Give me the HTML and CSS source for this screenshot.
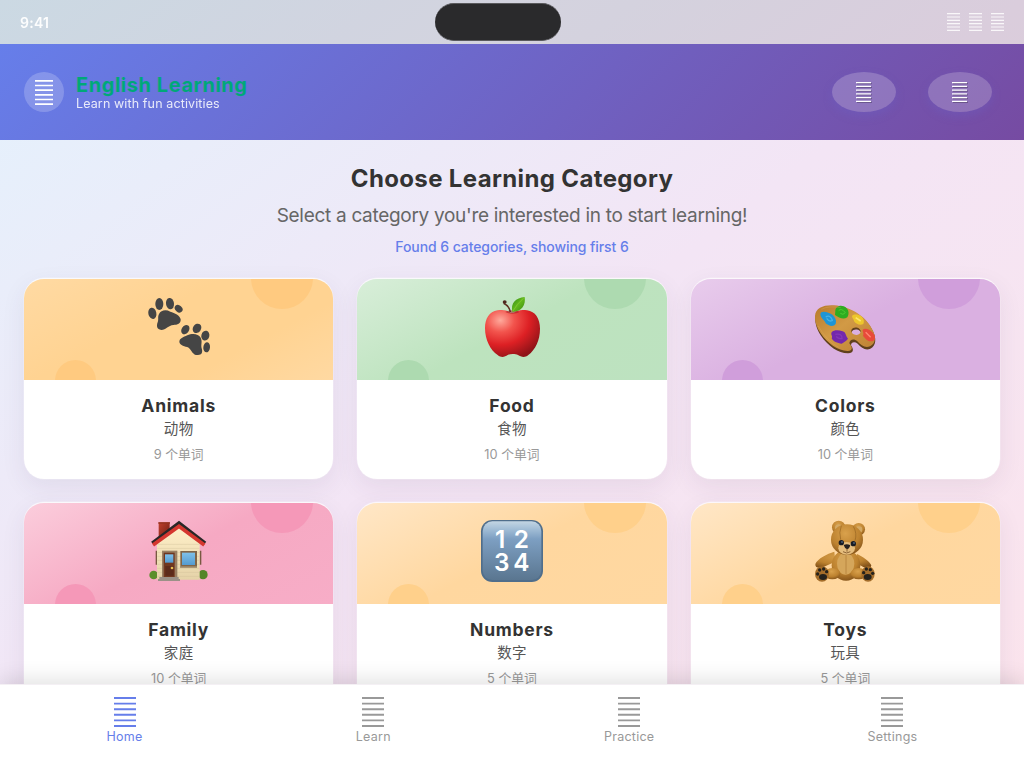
FILE: index.html
```html
<!DOCTYPE html>
<html lang="en">
<head>
<meta charset="utf-8">
<title>English Learning</title>
<link rel="stylesheet" href="styles.css">
</head>
<body>
<svg width="0" height="0" class="defs">
  <defs>
    <symbol id="bars" viewBox="0 0 22 29" preserveAspectRatio="none">
      <path d="M0 1H22M0 6.4H22M0 11.8H22M0 17.2H22M0 22.6H22M0 28H22" fill="none" stroke="currentColor" stroke-width="1.9"/>
    </symbol>
    <radialGradient id="apple" cx=".28" cy=".22" r=".85"><stop offset="0" stop-color="#ffaa9c"/><stop offset=".3" stop-color="#f2544d"/><stop offset=".62" stop-color="#dd2024"/><stop offset="1" stop-color="#8f1318"/></radialGradient>
    <linearGradient id="leaf" x1="0" y1="0" x2="1" y2="1"><stop offset="0" stop-color="#2f8a12"/><stop offset=".5" stop-color="#63b81c"/><stop offset="1" stop-color="#36890f"/></linearGradient>
    <linearGradient id="wood" x1="0" y1="0" x2="1" y2="1"><stop offset="0" stop-color="#b87a2c"/><stop offset=".45" stop-color="#d29a45"/><stop offset="1" stop-color="#bd8134"/></linearGradient>
    <linearGradient id="wall" x1="0" y1="0" x2="0" y2="1"><stop offset="0" stop-color="#fff0c9"/><stop offset="1" stop-color="#e5d3a8"/></linearGradient>
    <linearGradient id="brick" x1="0" y1="0" x2="1" y2="1"><stop offset="0" stop-color="#c0402c"/><stop offset="1" stop-color="#6b1d14"/></linearGradient>
    <linearGradient id="glass" x1="0" y1="0" x2="0" y2="1"><stop offset="0" stop-color="#7fc0e8"/><stop offset="1" stop-color="#559bd0"/></linearGradient>
    <linearGradient id="key" x1="0" y1="0" x2="0" y2="1"><stop offset="0" stop-color="#c3d5e3"/><stop offset=".14" stop-color="#a0bcd5"/><stop offset=".3" stop-color="#7d9fc2"/><stop offset="1" stop-color="#5a7690"/></linearGradient>
    <radialGradient id="fur" cx=".45" cy=".3" r=".75"><stop offset="0" stop-color="#d9a14c"/><stop offset=".6" stop-color="#bd822f"/><stop offset="1" stop-color="#7f4f18"/></radialGradient>
  </defs>
</svg>
<div class="app">
  <div class="status">
    <span class="time">9:41</span>
    <div class="island"></div>
    <div class="signals"><svg><use href="#bars"/></svg><svg><use href="#bars"/></svg><svg><use href="#bars"/></svg></div>
  </div>
  <header class="header">
    <div class="brand">
      <div class="avatar"><svg><use href="#bars"/></svg></div>
      <div><h1 class="name">English Learning</h1><p class="tagline">Learn with fun activities</p></div>
    </div>
    <div class="actions">
      <button class="round"><svg><use href="#bars"/></svg></button>
      <button class="round"><svg><use href="#bars"/></svg></button>
    </div>
  </header>
  <main class="main">
    <h2 class="title">Choose Learning Category</h2>
    <p class="subtitle">Select a category you're interested in to start learning!</p>
    <p class="found">Found 6 categories, showing first 6</p>
    <div class="grid">
      <article class="card">
        <div class="cover animals">
          <svg class="art" viewBox="0 0 192 192" fill="#454545">
            <ellipse cx="16" cy="55" rx="12" ry="17" transform="rotate(-12 16 55)"/><ellipse cx="37" cy="27" rx="12" ry="18"/><ellipse cx="69" cy="26" rx="12" ry="17" transform="rotate(-8 69 26)"/><ellipse cx="95" cy="41" rx="10" ry="13" transform="rotate(-48 95 41)"/>
            <path d="M36 57C42 45 57 43 70 50C83 54 99 61 101 73C102 87 91 90 79 90C64 91 57 105 43 105C29 103 28 93 32 82C36 72 31 67 36 57Z"/>
            <ellipse cx="115" cy="104" rx="11" ry="15" transform="rotate(35 115 104)"/><ellipse cx="150" cy="100" rx="12" ry="15" transform="rotate(35 150 100)"/><ellipse cx="175" cy="122" rx="12" ry="15" transform="rotate(15 175 122)"/><ellipse cx="179" cy="157" rx="10" ry="15" transform="rotate(7 179 157)"/>
            <path d="M97 141C97 130 109 127 121 121C135 114 154 115 161 128C167 140 161 147 164 160C168 173 164 180 153 180C137 181 136 168 125 158C114 153 99 153 97 141Z"/>
          </svg>
        </div>
        <div class="info"><h3>Animals</h3><p class="zh">动物</p><p class="count">9 个单词</p></div>
      </article>
      <article class="card">
        <div class="cover food">
          <svg class="art" viewBox="0 0 192 192">
            <path d="M92 54C79 44 67 44 53 46C27 49 15 72 15 100C15 134 31 166 53 180C65 190 75 185 83 180C91 176 106 176 114 180C123 185 133 190 145 180C166 164 180 135 180 101C180 71 166 49 141 46C127 43 111 45 102 53Z" fill="url(#apple)"/>
            <path d="M76 51C85 44 108 44 118 51C109 57 88 58 76 51Z" fill="#a11920" opacity=".55"/>
            <path d="M91 51C89 38 81 30 71 25" fill="none" stroke="#5e3021" stroke-width="5"/><ellipse cx="74" cy="21" rx="6" ry="5" fill="#4d281e"/>
            <path d="M97 50C91 25 107 8 134 6C138 29 125 51 97 50Z" fill="url(#leaf)"/><path d="M99 48Q111 26 130 10" fill="none" stroke="#8bcf37" stroke-width="2"/>
          </svg>
        </div>
        <div class="info"><h3>Food</h3><p class="zh">食物</p><p class="count">10 个单词</p></div>
      </article>
      <article class="card">
        <div class="cover colors">
          <svg class="art" viewBox="0 0 192 192">
            <path fill-rule="evenodd" d="M6 66C7 40 33 28 63 30C112 34 159 64 178 104C190 126 189 149 171 158C157 165 144 155 133 143C124 136 113 138 113 148C122 160 121 171 105 172C77 173 44 150 23 119C11 102 5 82 6 66ZM115 109a14 11 10 1 0 28 5a14 11 10 1 0 -28 -5Z" fill="#60401c" transform="translate(1 3)"/>
            <path fill-rule="evenodd" d="M6 64C7 38 33 29 63 31C112 35 159 64 177 102C190 124 189 145 171 154C157 161 144 151 133 139C124 130 110 132 109 145C120 158 119 167 105 168C77 169 44 146 23 115C11 98 5 80 6 64ZM115 106a14 11 10 1 0 28 5a14 11 10 1 0 -28 -5Z" fill="url(#wood)"/>
            <path d="M22 58C22 48 36 49 46 53C60 57 73 71 68 86C62 97 47 93 38 85C35 75 23 71 22 58Z" fill="#1e95d5"/><path d="M38 66q14-8 20 10q-9 6-17-6" fill="none" stroke="#45b2e6" stroke-width="4"/>
            <path d="M67 48C66 36 81 28 92 34C107 39 110 56 103 67C91 75 77 68 66 60Z" fill="#2eac20"/><path d="M77 47q8-9 20 6q-7 9-15 2" fill="none" stroke="#4dca31" stroke-width="3"/>
            <path d="M117 64C118 56 135 57 144 63C149 68 156 76 151 87C141 93 127 86 123 78C123 73 117 70 117 64Z" fill="#edc62c"/><path d="M128 68l15 10" stroke="#ffe668" stroke-width="5"/>
            <path d="M149 104C156 97 171 104 178 112C187 121 189 132 181 138C166 143 156 130 150 122C154 116 148 110 149 104Z" fill="#e84a3b"/><path d="M158 112l15 15" stroke="#ff8773" stroke-width="4"/>
            <path d="M56 112C63 104 77 105 89 109C99 111 97 122 105 131C102 137 94 140 86 146C74 145 59 139 56 130C60 124 52 119 56 112Z" fill="#7428ac"/><path d="M67 118q21-4 20 13q-13 0-17-7" fill="none" stroke="#8438b6" stroke-width="4"/>
            <path d="M16 93Q40 137 77 157M25 43Q48 31 83 38" fill="none" stroke="#e4b364" stroke-width="1.5" opacity=".6"/>
          </svg>
        </div>
        <div class="info"><h3>Colors</h3><p class="zh">颜色</p><p class="count">10 个单词</p></div>
      </article>
      <article class="card">
        <div class="cover family">
          <svg class="art house" viewBox="0 0 192 192">
            <rect x="38" y="10" width="33" height="52" fill="url(#brick)"/><path d="M37 12H72" stroke="#963522" stroke-width="5"/>
            <circle cx="23" cy="168" r="13" fill="#5b8f2c"/><circle cx="171" cy="167" r="14" fill="#538528"/>
            <path d="M29 95h5v42h-5ZM161 95h5v42h-5Z" fill="#785941"/>
            <path d="M33 70L99 22L161 70V182H33Z" fill="url(#wall)"/>
            <path d="M34 76H160M34 88H160M34 100H160M34 112H160M34 124H160M34 136H160M34 148H160M34 160H160M34 172H160" stroke="#cbbb94" stroke-width="1.5" opacity=".7"/>
            <path d="M19 73L99 13L177 73" fill="none" stroke="#292727" stroke-width="12"/><path d="M21 78L99 22L175 78" fill="none" stroke="#d5372f" stroke-width="11"/>
            <rect x="48" y="95" width="46" height="84" fill="#9a8063"/><rect x="53" y="101" width="33" height="75" fill="#70371f"/><rect x="57" y="106" width="25" height="25" fill="url(#glass)"/><path d="M58 141h25v29H58Z" fill="#5c2b1b"/><circle cx="78" cy="147" r="4" fill="#e8bd50"/>
            <rect x="103" y="96" width="50" height="49" fill="#806548"/><rect x="108" y="101" width="39" height="37" fill="url(#glass)"/><path d="M102 144H153" stroke="#a08c6c" stroke-width="4"/>
            <path d="M40 174H98V180H102V186H36V180H40Z" fill="#9b9187"/>
          </svg>
        </div>
        <div class="info"><h3>Family</h3><p class="zh">家庭</p><p class="count">10 个单词</p></div>
      </article>
      <article class="card">
        <div class="cover numbers">
          <svg class="art" viewBox="0 0 192 192">
            <rect x="3" y="3" width="186" height="186" rx="34" fill="#506e8b"/><rect x="8" y="7" width="176" height="176" rx="29" fill="url(#key)"/>
            <g class="digits"><text x="45" y="87">1</text><text x="101" y="87">2</text><text x="42" y="156">3</text><text x="100" y="156">4</text></g>
          </svg>
        </div>
        <div class="info"><h3>Numbers</h3><p class="zh">数字</p><p class="count">5 个单词</p></div>
      </article>
      <article class="card">
        <div class="cover toys">
          <svg class="art" viewBox="0 0 192 192">
            <path d="M64 98C42 104 14 119 7 135C6 148 19 148 31 144L67 128ZM132 105C148 113 169 126 175 139C173 152 160 149 151 144L129 132Z" fill="url(#fur)"/>
            <circle cx="77" cy="25" r="20" fill="url(#fur)"/><circle cx="137" cy="31" r="19" fill="url(#fur)"/><circle cx="77" cy="27" r="11" fill="#d4aa66"/><circle cx="138" cy="32" r="10" fill="#d4aa66"/>
            <ellipse cx="99" cy="139" rx="43" ry="46" fill="url(#fur)"/><ellipse cx="98" cy="134" rx="26" ry="33" fill="#d5a65b"/><path d="M99 103V165" stroke="#ad7a33" stroke-width="2"/>
            <ellipse cx="58" cy="164" rx="24" ry="17" fill="url(#fur)"/><ellipse cx="137" cy="164" rx="24" ry="17" fill="url(#fur)"/>
            <ellipse cx="102" cy="62" rx="48" ry="46" fill="url(#fur)"/><path d="M85 20Q77 40 83 62M121 22Q133 43 126 65" fill="none" stroke="#966321" stroke-width="2"/>
            <ellipse cx="101" cy="88" rx="25" ry="19" fill="#e5bd7d"/><circle cx="85" cy="71" r="8" fill="#171b23"/><circle cx="121" cy="74" r="8" fill="#171b23"/><circle cx="87" cy="69" r="2" fill="#80a2ca"/><circle cx="123" cy="72" r="2" fill="#80a2ca"/><path d="M92 78Q102 73 112 79Q108 91 102 91Q95 88 92 78Z" fill="#28221f"/><path d="M102 89V98M90 98Q101 106 112 98" fill="none" stroke="#795026" stroke-width="2.5"/>
            <ellipse cx="27" cy="165" rx="21" ry="23" fill="#a46d2a"/><ellipse cx="165" cy="165" rx="20" ry="23" fill="#a46d2a"/>
            <g fill="#25221c"><ellipse cx="30" cy="174" rx="12" ry="9"/><circle cx="14" cy="165" r="5"/><circle cx="20" cy="153" r="5"/><circle cx="32" cy="150" r="5"/><circle cx="41" cy="158" r="5"/><ellipse cx="164" cy="174" rx="12" ry="9"/><circle cx="152" cy="161" r="5"/><circle cx="160" cy="150" r="5"/><circle cx="172" cy="152" r="5"/><circle cx="179" cy="163" r="5"/></g>
          </svg>
        </div>
        <div class="info"><h3>Toys</h3><p class="zh">玩具</p><p class="count">5 个单词</p></div>
      </article>
    </div>
  </main>
  <nav class="tabs">
    <a class="tab active"><svg><use href="#bars"/></svg><span>Home</span></a>
    <a class="tab"><svg><use href="#bars"/></svg><span>Learn</span></a>
    <a class="tab"><svg><use href="#bars"/></svg><span>Practice</span></a>
    <a class="tab"><svg><use href="#bars"/></svg><span>Settings</span></a>
  </nav>
</div>
</body>
</html>
```

FILE: styles.css
```css
* { box-sizing: border-box; margin: 0; padding: 0; }
body { font-family: Inter, "Noto Sans CJK SC", sans-serif; overflow: hidden; }
svg { display: block; }
.defs { position: absolute; }
.app { height: 768px; display: flex; flex-direction: column; overflow: hidden; background: linear-gradient(to bottom right, #e3f2fd 0%, #f3e5f5 50%, #fce4ec 100%); }
.status { flex: none; height: 44px; padding: 0 20px; display: flex; align-items: center; justify-content: space-between; background: rgba(0,0,0,.1); position: relative; color: #fff; }
.time { font-size: 14px; font-weight: 600; line-height: 20px; padding-top: 2px; letter-spacing: .25px; opacity: .95; }
.island { position: absolute; left: 435px; top: 3px; width: 126px; height: 38px; border-radius: 19px; background: #2a2a2c; border: 1px solid #59595c; border-width: 1px 0; }
.signals { display: flex; gap: 9px; opacity: .85; }
.signals svg { width: 13px; height: 18px; }
.header { flex: none; height: 96px; padding: 0 32px 0 24px; display: flex; align-items: center; justify-content: space-between; background: linear-gradient(135deg, #667eea, #764ba2); color: #fff; }
.brand { display: flex; align-items: center; gap: 12px; }
.avatar { width: 40px; height: 40px; border-radius: 50%; background: rgba(255,255,255,.2); display: grid; place-items: center; }
.avatar svg { width: 18px; height: 25px; margin-top: 1px; }
.name { font-size: 20px; line-height: 24px; font-weight: 650; letter-spacing: .55px; color: #00a878; }
.tagline { font-size: 12.5px; line-height: 14px; letter-spacing: .12px; opacity: .85; }
.actions { display: flex; gap: 32px; }
.round { width: 64px; height: 40px; border: 0; border-radius: 50%; background: rgba(255,255,255,.2); color: #fff; display: grid; place-items: center; box-shadow: 0 4px 10px rgba(102,104,210,.25); }
.round svg { width: 15px; height: 20px; margin: 0 1px 0 0; filter: drop-shadow(1px 1px .5px rgba(0,0,0,.25)); }
.main { flex: 1; min-height: 0; overflow: hidden; padding: 24px 24px 0; text-align: center; }
.title { font-size: 24px; line-height: 30px; font-weight: 650; letter-spacing: .36px; color: #333; }
.subtitle { margin-top: 9px; font-size: 19px; line-height: 26px; letter-spacing: -.3px; color: #666; }
.found { margin-top: 8px; font-size: 14px; line-height: 20px; font-weight: 450; letter-spacing: -.08px; color: #667eea; }
.grid { margin-top: 21px; display: grid; grid-template-columns: repeat(3, 1fr); column-gap: 24px; row-gap: 23.5px; }
.card { height: 200.5px; border-top: 1px solid rgba(255,255,255,.6); border-radius: 20px; overflow: hidden; background: #fff; background-clip: padding-box; box-shadow: 0 0 0 .5px rgba(255,255,255,.4), 0 8px 24px rgba(60,50,90,.08); }
.cover { height: 101px; position: relative; overflow: hidden; padding-top: 16px; }
.cover::before, .cover::after { content: ""; position: absolute; border-radius: 50%; background: var(--dot); }
.cover::before { width: 62px; height: 62px; top: -32px; right: 20.5px; }
.cover::after { width: 41px; height: 41px; left: 31px; top: 81px; }
.art { width: 64px; height: 64px; margin: 0 auto; }
.house { transform: translateX(-1px); }
.animals { background: linear-gradient(152deg, #ffdaa3, #ffd392 40%, #ffd392 70%, #ffd9a2); --dot: #ffca80; }
.food { background: linear-gradient(152deg, #d8eed9, #bde3be 50%, #bde2c0); --dot: #addab0; }
.colors { background: linear-gradient(152deg, #e8ccec, #dab0e1 50%, #dab0e1); --dot: #d09edb; }
.family { background: linear-gradient(152deg, #fbcddc, #f6a9c3 50%, #f7adc7); --dot: #f598b8; }
.numbers, .toys { background: linear-gradient(152deg, #ffe7c7, #ffd79f 50%, #ffd8a1); --dot: #ffd08b; }
.digits { font: 600 73px/1 Inter, sans-serif; fill: #fff; }
.info { padding-top: 15px; }
.info h3 { font-size: 17.5px; line-height: 22px; font-weight: 650; letter-spacing: .75px; color: #333; }
.zh { margin-top: 1px; font-size: 14.5px; line-height: 22px; font-weight: 400; letter-spacing: .3px; color: #555; }
.count { margin-top: 5px; font-size: 12.8px; line-height: 20px; color: #999; }
.tabs { flex: none; height: 84.5px; padding-top: 12px; position: relative; display: flex; justify-content: space-around; align-items: flex-start; border-top: 1px solid #f4f0f4; background: #fff; box-shadow: 0 -4px 20px rgba(0,0,0,.12); color: #999; }
.tab { display: flex; flex-direction: column; align-items: center; font-size: 12.5px; line-height: 18px; letter-spacing: .25px; }
.tab svg { width: 22px; height: 30px; margin-bottom: 1px; }
.active { color: #667eea; }
```
